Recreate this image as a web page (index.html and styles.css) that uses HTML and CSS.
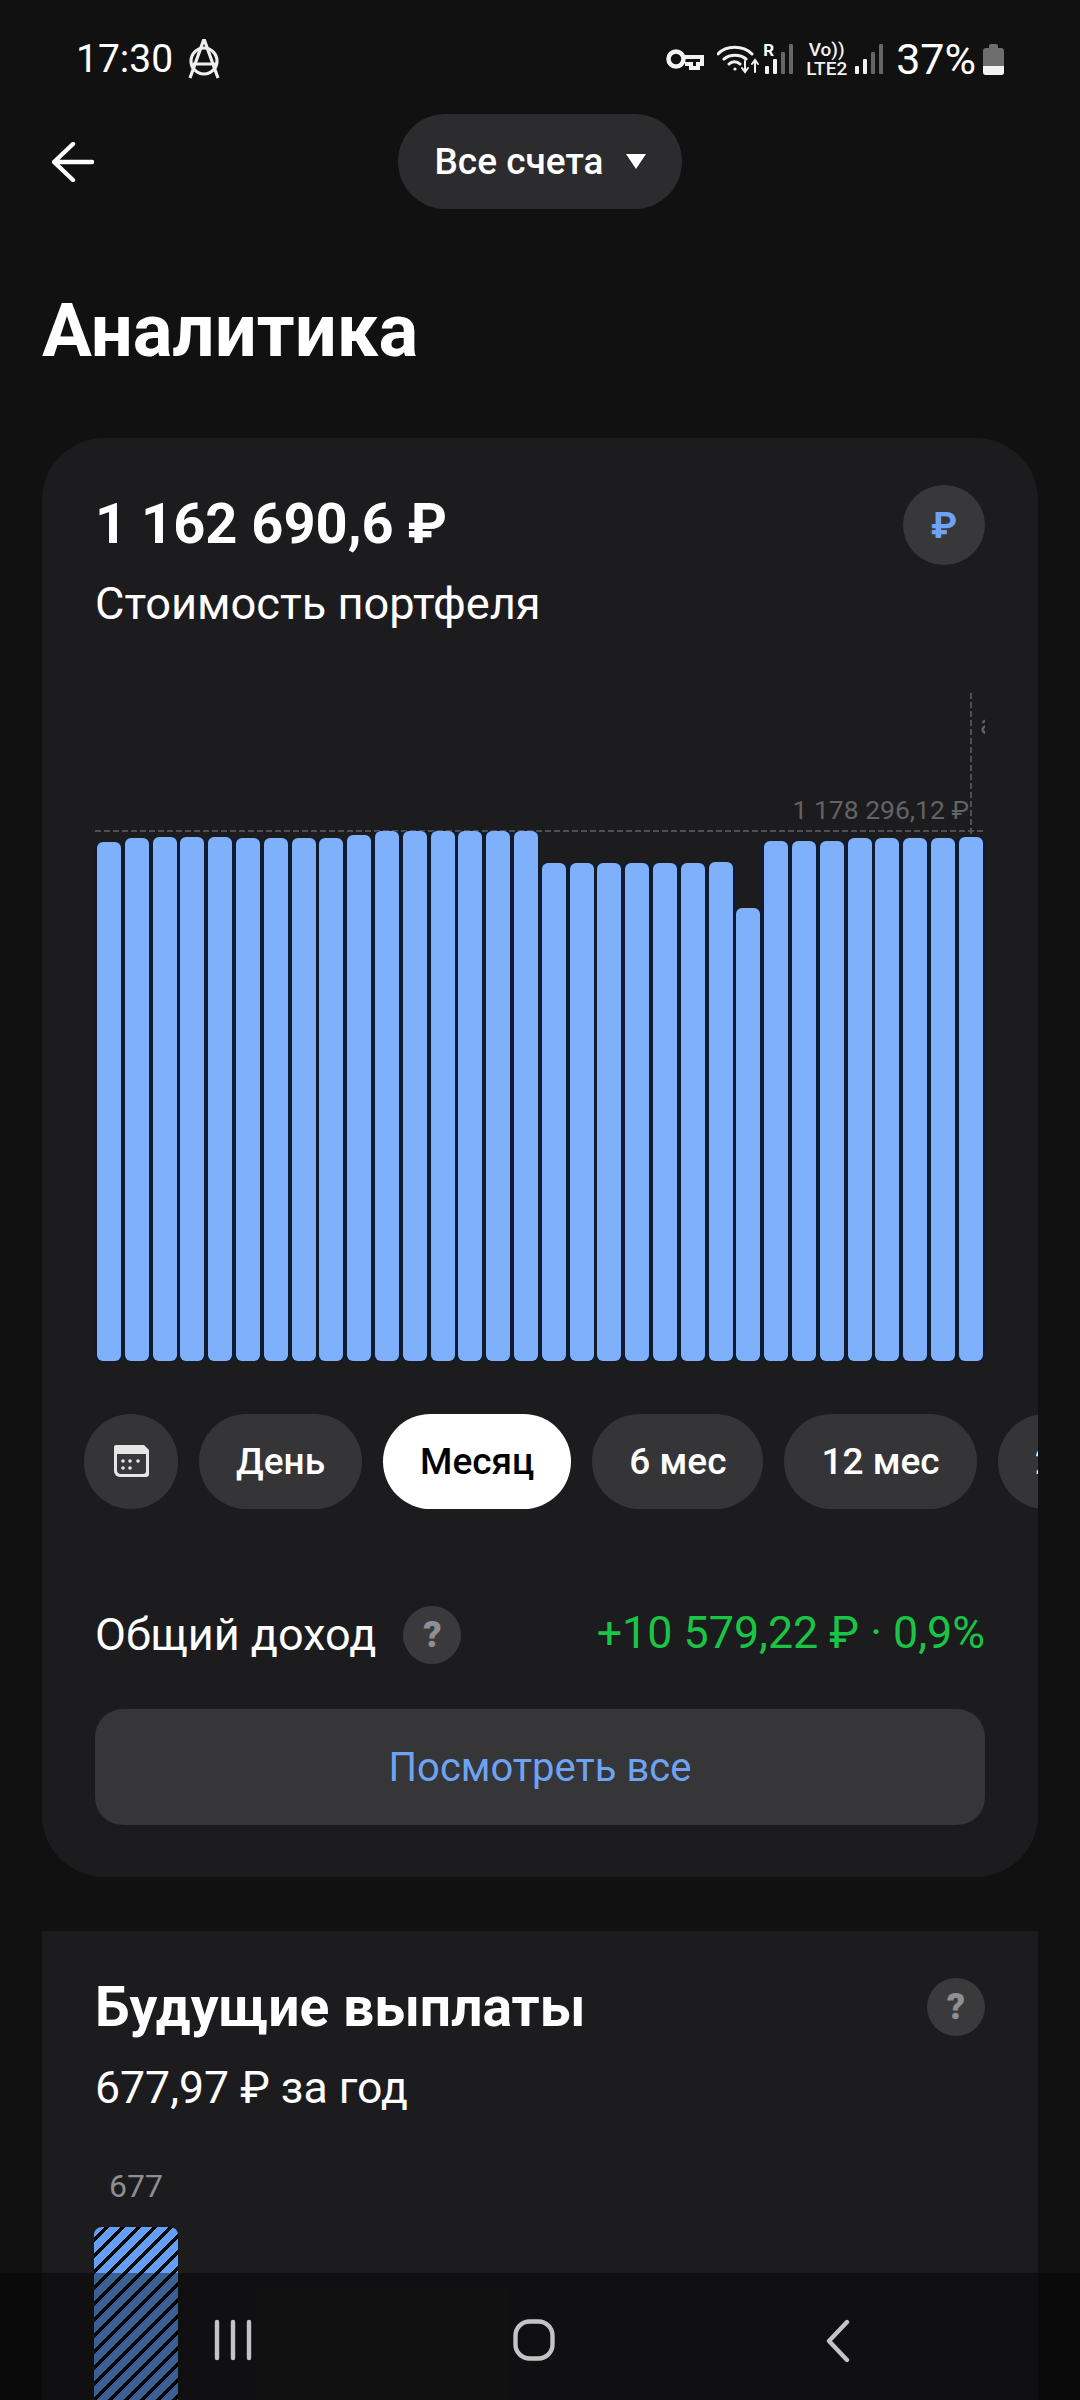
FILE: index.html
```html
<!DOCTYPE html>
<html lang="ru">
<head>
    <meta charset="UTF-8">
    <meta name="viewport" content="width=device-width, initial-scale=1.0">
    <title>Аналитика</title>
    <link rel="stylesheet" href="styles.css">
</head>
<body>
    <div class="screen">
        <div class="status">
            <div class="status-left">
                <span class="clock">17:30</span>
                <svg class="anarchy" viewBox="0 0 38 40" fill="none" stroke="#eee" stroke-width="3.2">
                    <circle cx="19" cy="22" r="13"/>
                    <path d="M5 39 19 0l14 39M8 25h23"/>
                </svg>
            </div>
            <div class="status-right">
                <svg class="key" viewBox="0 0 38 22" fill="none" stroke="#f2f2f2" stroke-width="4.5">
                    <circle cx="10" cy="11" r="7.5"/>
                    <path d="M18 9h18v7h-4v4h-7v-4h-6" stroke-width="4"/>
                </svg>
                <svg class="wifi" viewBox="0 0 42 30" fill="none" stroke="#f2f2f2" stroke-width="3" stroke-linecap="round">
                    <path d="M1 10C9 1 26 1 35 10M7 15c6-5 16-5 22 0M12 20c3-3 8-3 11 0"/>
                    <circle cx="18" cy="25" r="1.6" fill="#f2f2f2" stroke="none"/>
                    <path d="M28 17v10M25 24l3 4 3-4M38 28V16M35 20l3-4 3 4" stroke-width="2"/>
                </svg>
                <div class="sim">
                    <span class="sim-r">R</span>
                    <span class="sig sig-a"><i class="on"></i><i class="on"></i><i></i><i></i></span>
                </div>
                <div class="volte"><span>Vo))</span><span>LTE2</span></div>
                <span class="sig"><i class="on"></i><i class="on"></i><i></i><i></i></span>
                <span class="percent">37%</span>
                <div class="battery"><div class="battery-cap"></div><div class="battery-body"><div class="battery-level"></div></div></div>
            </div>
        </div>

        <div class="topbar">
            <svg class="back" viewBox="0 0 42 40" fill="none" stroke="#fff" stroke-width="4.4" stroke-linecap="round" stroke-linejoin="round">
                <path d="M21 2 2 20l19 18M3 20h37"/>
            </svg>
            <div class="account-pill">Все счета <span class="caret"></span></div>
        </div>

        <h1 class="title">Аналитика</h1>

        <section class="card portfolio">
            <div class="card-head">
                <div>
                    <div class="total">1 162 690,6 ₽</div>
                    <div class="total-label">Стоимость портфеля</div>
                </div>
                <div class="currency">₽</div>
            </div>

            <div class="chart">
                <div class="line-v"></div>
                <div class="line-h"></div>
                <div class="max-label">1 178 296,12 ₽</div>
                <div class="date-label">а</div>
                <div class="bars">
                    <div class="bar" style="height:519px"></div>
                    <div class="bar" style="height:523px"></div>
                    <div class="bar" style="height:524px"></div>
                    <div class="bar" style="height:524px"></div>
                    <div class="bar" style="height:524px"></div>
                    <div class="bar" style="height:523px"></div>
                    <div class="bar" style="height:523px"></div>
                    <div class="bar" style="height:523px"></div>
                    <div class="bar" style="height:523px"></div>
                    <div class="bar" style="height:526px"></div>
                    <div class="bar" style="height:530px"></div>
                    <div class="bar" style="height:530px"></div>
                    <div class="bar" style="height:530px"></div>
                    <div class="bar" style="height:530px"></div>
                    <div class="bar" style="height:530px"></div>
                    <div class="bar" style="height:530px"></div>
                    <div class="bar" style="height:498px"></div>
                    <div class="bar" style="height:498px"></div>
                    <div class="bar" style="height:498px"></div>
                    <div class="bar" style="height:498px"></div>
                    <div class="bar" style="height:498px"></div>
                    <div class="bar" style="height:498px"></div>
                    <div class="bar" style="height:499px"></div>
                    <div class="bar" style="height:453px"></div>
                    <div class="bar" style="height:520px"></div>
                    <div class="bar" style="height:520px"></div>
                    <div class="bar" style="height:520px"></div>
                    <div class="bar" style="height:523px"></div>
                    <div class="bar" style="height:523px"></div>
                    <div class="bar" style="height:523px"></div>
                    <div class="bar" style="height:523px"></div>
                    <div class="bar" style="height:524px"></div>
                </div>
            </div>

            <div class="periods">
                <div class="period period-icon">
                    <svg viewBox="0 0 36 33" width="36" height="33">
                        <path d="M3 0h28l5 5v24a3 3 0 0 1-3 3H7a6 6 0 0 1-6-6V2a2 2 0 0 1 2-2z" fill="#e6e6e6"/>
                        <path d="M4 9h29v17a3 3 0 0 1-3 3H8a4 4 0 0 1-4-4z" fill="#38383a"/>
                        <g fill="#e6e6e6">
                            <circle cx="10" cy="16" r="1.8"/><circle cx="17" cy="16" r="1.8"/><circle cx="25" cy="16" r="1.8"/>
                            <circle cx="10" cy="23" r="1.8"/><circle cx="17" cy="23" r="1.8"/>
                        </g>
                    </svg>
                </div>
                <div class="period">День</div>
                <div class="period active">Месяц</div>
                <div class="period">6 мес</div>
                <div class="period">12 мес</div>
                <div class="period">2 года</div>
            </div>

            <div class="income">
                <div class="income-name">Общий доход <span class="hint">?</span></div>
                <div class="income-value">+10 579,22 ₽ · 0,9%</div>
            </div>

            <div class="see-all">Посмотреть все</div>
        </section>

        <section class="card payouts">
            <div class="payouts-head">
                <h2 class="payouts-title">Будущие выплаты</h2>
                <span class="hint">?</span>
            </div>
            <div class="payouts-sum">677,97 ₽ за год</div>
            <div class="payout-col">
                <div class="payout-value">677</div>
                <div class="payout-bar"></div>
            </div>
        </section>

        <nav class="navbar">
            <svg width="38" height="42" viewBox="0 0 38 42" stroke="#c4c4c4" stroke-width="4.4" stroke-linecap="round">
                <path d="M3 3v36M19 3v36M35 3v36"/>
            </svg>
            <svg class="nav-home" width="42" height="42" viewBox="0 0 42 42" fill="none" stroke="#c4c4c4" stroke-width="4.4">
                <rect x="2.5" y="2.5" width="37" height="37" rx="14"/>
            </svg>
            <svg width="24" height="44" viewBox="0 0 24 44" fill="none" stroke="#c4c4c4" stroke-width="4.4" stroke-linecap="round" stroke-linejoin="round">
                <path d="M21 3 3 22l18 19"/>
            </svg>
        </nav>
    </div>
</body>
</html>
```

FILE: styles.css
```css
* {
    box-sizing: border-box;
}
body {
    margin: 0;
    background-color: #111112;
    font-family: Roboto, "Noto Sans", sans-serif;
    color: #fff;
}
.screen {
    position: relative;
    width: 1080px;
    height: 2400px;
    overflow: hidden;
}

/* status bar */
.status {
    height: 114px;
    padding: 38px 76px 0 76px;
    display: flex;
    justify-content: space-between;
    align-items: flex-start;
}
.status-left, .status-right {
    display: flex;
    align-items: center;
}
.status-left {
    gap: 12px;
}
.clock {
    font-size: 39px;
    line-height: 42px;
}
.anarchy {
    width: 38px;
    height: 40px;
}
.status-right {
    height: 42px;
}
.key {
    width: 38px;
    height: 22px;
    margin-right: 13px;
}
.wifi {
    width: 42px;
    height: 30px;
    margin-right: 4px;
}
.sim {
    position: relative;
    width: 34px;
    height: 32px;
    margin-right: 8px;
}
.sim-r {
    position: absolute;
    left: 0;
    top: -2px;
    font-size: 17px;
    font-weight: 700;
    line-height: 18px;
}
.sig {
    display: flex;
    align-items: flex-end;
    gap: 4px;
    height: 30px;
}
.sig-a {
    position: absolute;
    left: 2px;
    bottom: 1px;
}
.sig i {
    display: block;
    width: 4px;
    background: #666;
    border-radius: 1px;
}
.sig i.on {
    background: #f2f2f2;
}
.sig i:nth-child(1) { height: 8px; }
.sig i:nth-child(2) { height: 15px; }
.sig i:nth-child(3) { height: 22px; }
.sig i:nth-child(4) { height: 30px; }
.volte {
    display: flex;
    flex-direction: column;
    align-items: center;
    font-size: 19px;
    font-weight: 500;
    line-height: 19px;
    margin-right: 7px;
    width: 43px;
    color: #f2f2f2;
}
.percent {
    font-size: 43px;
    line-height: 42px;
    margin-left: 13px;
    margin-right: 7px;
}
.battery {
    width: 21px;
    display: flex;
    flex-direction: column;
    align-items: center;
}
.battery-cap {
    width: 9px;
    height: 4px;
    background: #6e6e6e;
    border-radius: 2px 2px 0 0;
}
.battery-body {
    width: 21px;
    height: 27px;
    background: #6e6e6e;
    border-radius: 3px;
    display: flex;
    align-items: flex-end;
    overflow: hidden;
}
.battery-level {
    width: 100%;
    height: 9px;
    background: #f2f2f2;
}

/* top bar */
.topbar {
    height: 95px;
    display: flex;
    justify-content: center;
    position: relative;
}
.back {
    position: absolute;
    left: 52px;
    top: 28px;
    width: 42px;
    height: 40px;
}
.account-pill {
    width: 284px;
    height: 95px;
    background: #2c2c2e;
    border-radius: 48px;
    font-size: 37px;
    font-weight: 500;
    display: flex;
    align-items: center;
    justify-content: center;
    gap: 22px;
}
.caret {
    width: 0;
    height: 0;
    border-left: 10px solid transparent;
    border-right: 10px solid transparent;
    border-top: 15px solid #fff;
}
.title {
    margin: 80px 0 0 42px;
    height: 149px;
    font-size: 74.3px;
    line-height: 84px;
    font-weight: 700;
}

/* cards */
.card {
    margin: 0 42px;
    background: #1c1c1e;
    overflow: hidden;
}
.portfolio {
    height: 1439px;
    border-radius: 62px;
    padding: 47px 53px 0;
}
.card-head {
    display: flex;
    justify-content: space-between;
    align-items: flex-start;
    height: 158px;
}
.total {
    font-size: 56px;
    font-weight: 700;
    line-height: 74px;
    margin-top: 2px;
}
.total-label {
    font-size: 45.2px;
    line-height: 52px;
    margin-top: 17px;
}
.currency {
    width: 82px;
    height: 80px;
    border-radius: 50%;
    background: #38383a;
    color: #6ea3f3;
    font-size: 37px;
    font-weight: 700;
    display: flex;
    align-items: center;
    justify-content: center;
}

/* chart */
.chart {
    position: relative;
    width: 890px;
    height: 668px;
    margin-top: 50px;
    overflow: hidden;
}
.bars {
    position: absolute;
    left: 2px;
    right: 2px;
    bottom: 0;
    display: flex;
    justify-content: space-between;
    align-items: flex-end;
}
.bar {
    width: 24px;
    background: #7eb0fb;
    border-radius: 6px;
    box-shadow: 2px 0 0 #101b2e, -2px 0 0 #101b2e;
}
.line-h {
    position: absolute;
    left: 0;
    right: 2px;
    top: 137px;
    height: 2px;
    background: repeating-linear-gradient(90deg, #4f4f51 0, #4f4f51 6px, transparent 6px, transparent 9px);
}
.line-v {
    position: absolute;
    left: 875px;
    top: 0;
    width: 2px;
    height: 145px;
    background: repeating-linear-gradient(180deg, #4f4f51 0, #4f4f51 6px, transparent 6px, transparent 9px);
}
.max-label {
    position: absolute;
    right: 16px;
    top: 100px;
    font-size: 26.5px;
    line-height: 34px;
    color: #636365;
    white-space: nowrap;
}
.date-label {
    position: absolute;
    left: 885px;
    top: 15px;
    font-size: 27px;
    line-height: 34px;
    color: #636365;
}

/* period switcher */
.periods {
    display: flex;
    gap: 21px;
    margin: 53px -60px 0 -11px;
}
.period {
    flex: none;
    height: 95px;
    padding: 0 37px;
    background: #353537;
    border-radius: 48px;
    font-size: 37px;
    font-weight: 500;
    display: flex;
    align-items: center;
}
.period-icon {
    width: 94px;
    padding: 0;
    justify-content: center;
}
.period.active {
    background: #fff;
    color: #000;
}

/* income */
.income {
    display: flex;
    justify-content: space-between;
    align-items: center;
    height: 58px;
    margin-top: 97px;
}
.income-name {
    font-size: 45px;
    line-height: 50px;
    display: flex;
    align-items: center;
    gap: 27px;
}
.income-value {
    font-size: 44.8px;
    line-height: 50px;
    margin-top: -4px;
    color: #1ac445;
    white-space: nowrap;
}
.hint {
    width: 58px;
    height: 58px;
    border-radius: 50%;
    background: #3a3a3c;
    color: #8e8e93;
    font-size: 36px;
    font-weight: 900;
    display: flex;
    align-items: center;
    justify-content: center;
}
.see-all {
    height: 116px;
    margin-top: 45px;
    background: #363638;
    border-radius: 28px;
    color: #6ea3f3;
    font-size: 40px;
    display: flex;
    align-items: center;
    justify-content: center;
}

/* future payouts */
.payouts {
    height: 520px;
    margin-top: 54px;
    padding: 47px 53px 0;
}
.payouts-head {
    display: flex;
    justify-content: space-between;
    align-items: center;
    height: 58px;
}
.payouts-title {
    margin: 0;
    font-size: 55.2px;
    font-weight: 700;
    line-height: 58px;
}
.payouts-sum {
    font-size: 44.6px;
    line-height: 52px;
    margin-top: 26px;
}
.payout-col {
    width: 84px;
    margin-left: -1px;
    margin-top: 53px;
}
.payout-value {
    font-size: 32px;
    line-height: 38px;
    color: #8e8e90;
    text-align: center;
}
.payout-bar {
    height: 400px;
    margin-top: 22px;
    border-radius: 8px 8px 0 0;
    background: repeating-linear-gradient(135deg, #62a0f5 0, #62a0f5 7.5px, #050608 7.5px, #050608 11.3px);
}

.navbar {
    position: absolute;
    left: 0;
    right: 0;
    bottom: 0;
    height: 127px;
    background: rgba(0, 0, 0, 0.4);
    padding: 46px 0 0 214px;
    display: flex;
    gap: 261px;
    align-items: flex-start;
}
.nav-home {
    margin-right: 10px;
}
```
